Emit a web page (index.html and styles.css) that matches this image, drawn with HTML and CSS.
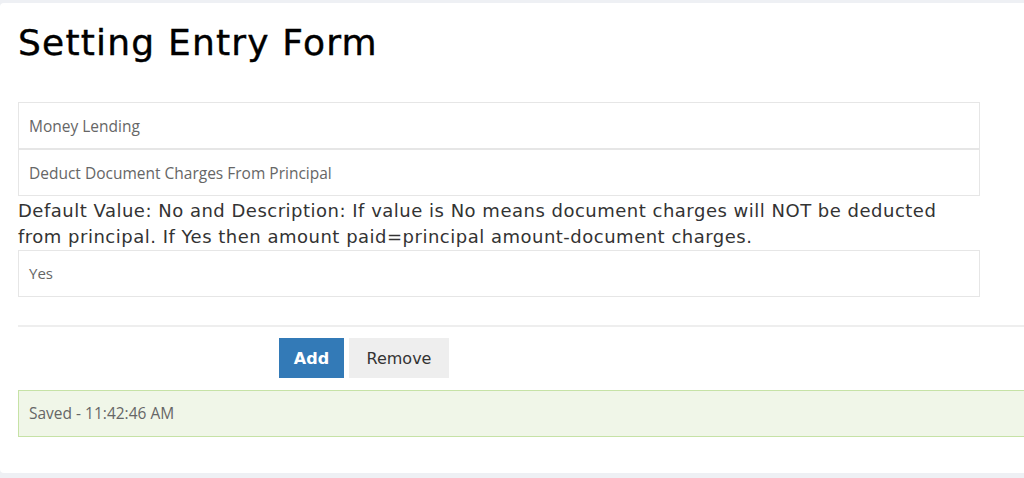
FILE: index.html
```html
<!DOCTYPE html>
<html lang="en">
<head>
  <meta charset="UTF-8" />
  <title>Setting Entry Form</title>
  <link rel="stylesheet" href="styles.css">
</head>
<body>

<div class="card">
  <h1>Setting Entry Form</h1>

  <div class="fields">
    <input type="text" class="field" value="Money Lending" readonly>
    <input type="text" class="field" value="Deduct Document Charges From Principal" readonly>
  </div>

  <p class="desc">Default Value: No and Description: If value is No means document charges will NOT be deducted from principal. If Yes then amount paid=principal amount-document charges.</p>

  <div class="field field-select">Yes</div>

  <hr>

  <div class="actions">
    <button class="btn btn-primary">Add</button>
    <button class="btn btn-default">Remove</button>
  </div>

  <div class="alert-success">Saved - 11:42:46 AM</div>
</div>

</body>
</html>
```

FILE: styles.css
```css
html, body {
  margin: 0;
  overflow: hidden;
}

body {
  background: #eef0f4;
  padding-top: 3px;
  font-family: "DejaVu Sans", sans-serif;
  color: #333;
}

.card {
  background: #fff;
  width: 1100px;
  height: 470px;
  box-sizing: border-box;
  padding: 18px 0 0 18px;
  border-radius: 4px;
}

h1 {
  font-family: "DejaVu Sans", sans-serif;
  font-weight: normal;
  font-size: 36px;
  letter-spacing: 1.2px;
  line-height: 40px;
  margin: 2px 0 39px;
  color: #000;
  -webkit-text-stroke: 0.4px #000;
}

.fields {
  display: flex;
  flex-direction: column;
}

.field {
  display: block;
  width: 962px;
  height: 47px;
  box-sizing: border-box;
  border: 1px solid #e6e6e6;
  padding: 0 10px;
  font-family: "Open Sans", sans-serif;
  font-size: 15.5px;
  color: #666;
  background: #fff;
  outline: none;
  margin: 0;
}

.field-select {
  font-size: 15px;
  line-height: 45px;
}

.desc {
  margin: 2px 0 0;
  width: 962px;
  font-size: 18px;
  letter-spacing: 0.5px;
  line-height: 26px;
  color: #333;
}

hr {
  border: 0;
  border-top: 2px solid #eee;
  margin: 28px 0 11px;
}

.actions {
  display: flex;
  gap: 5px;
  padding-left: 261px;
}

.btn {
  height: 40px;
  border: 0;
  border-radius: 0;
  font-family: "DejaVu Sans", sans-serif;
  font-size: 16px;
  padding: 0;
  cursor: pointer;
}

.btn-primary {
  background: #337ab7;
  color: #fff;
  font-weight: bold;
  width: 65px;
}

.btn-default {
  background: #eee;
  color: #333;
  width: 100px;
}

.alert-success {
  margin-top: 12px;
  height: 47px;
  box-sizing: border-box;
  background: #f0f6e8;
  border: 1px solid #c6e2a6;
  padding: 0 10px;
  line-height: 45px;
  font-family: "Open Sans", sans-serif;
  font-size: 15.5px;
  color: #666;
}
```
